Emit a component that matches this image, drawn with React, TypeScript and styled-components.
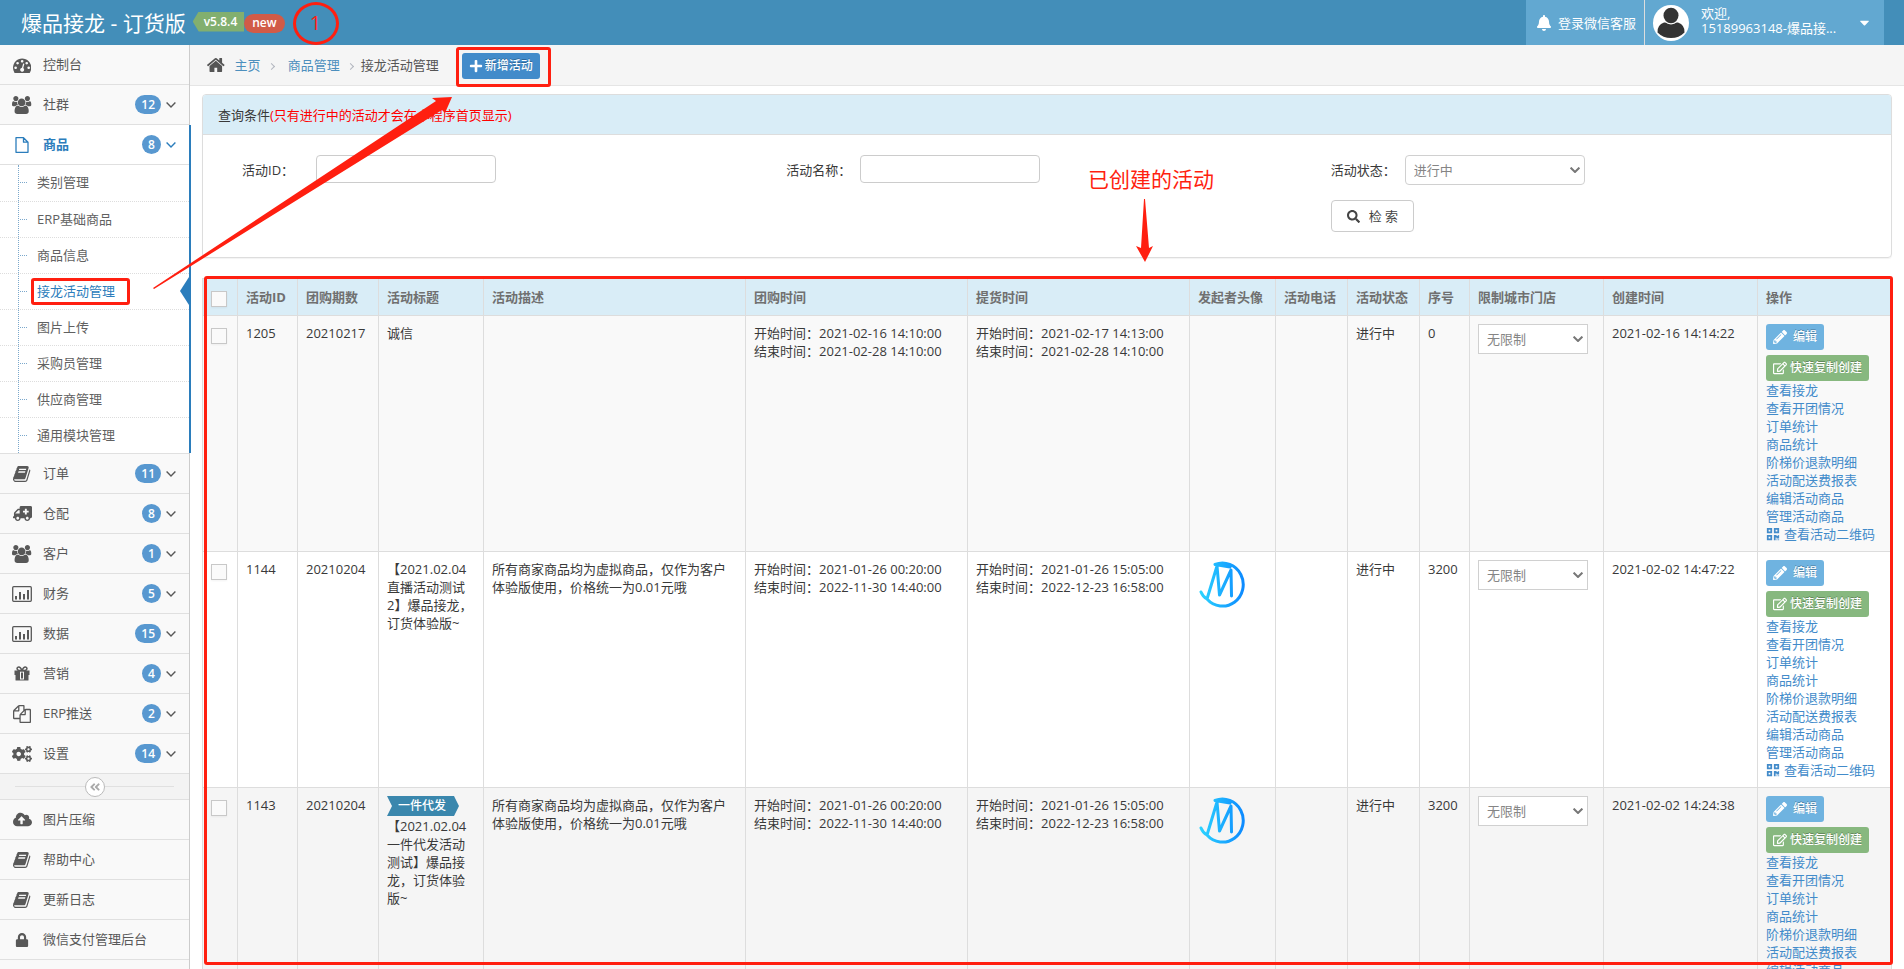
import React from 'react';
import styled, { createGlobalStyle, css } from 'styled-components';
import {
  FaAmbulance,
  FaAngleDoubleLeft,
  FaBell,
  FaCaretDown,
  FaCloudUploadAlt,
  FaCogs,
  FaLock,
  FaPencilAlt,
  FaPlus,
  FaQrcode,
  FaRegEdit,
  FaSearch,
} from 'react-icons/fa';

const RED = '#ff1f10';

const GlobalStyle = createGlobalStyle`
  *, *::before, *::after { box-sizing: border-box; }
  body {
    margin: 0;
    background: #fff;
    color: #393939;
    font: 13px/18px "Open Sans", "Noto Sans CJK SC", sans-serif;
  }
  a { color: inherit; text-decoration: none; }
  button, input, select { font: inherit; margin: 0; }
  ul { list-style: none; margin: 0; padding: 0; }
`;

/* ---------- icons ---------- */

type GlyphProps = { box: string; d: string; size: number };

const Glyph = ({ box, d, size }: GlyphProps) => (
  <svg viewBox={box} height={size} fill="currentColor" aria-hidden="true">
    <path d={d} />
  </svg>
);

const DashboardIcon = () => (
  <Glyph
    box="0 0 1792 1664"
    size={17}
    d="M384 1152q0-53-37.5-90.5t-90.5-37.5-90.5 37.5-37.5 90.5 37.5 90.5 90.5 37.5 90.5-37.5 37.5-90.5zm192-448q0-53-37.5-90.5t-90.5-37.5-90.5 37.5-37.5 90.5 37.5 90.5 90.5 37.5 90.5-37.5 37.5-90.5zm428 481l101-382q6-26-7.5-48.5t-38.5-29.5-48 6.5-30 39.5l-101 382q-60 5-107 43.5t-63 98.5q-20 77 20 146t117 89 146-20 89-117q16-60-6-117t-72-91zm660-33q0-53-37.5-90.5t-90.5-37.5-90.5 37.5-37.5 90.5 37.5 90.5 90.5 37.5 90.5-37.5 37.5-90.5zm-640-640q0-53-37.5-90.5t-90.5-37.5-90.5 37.5-37.5 90.5 37.5 90.5 90.5 37.5 90.5-37.5 37.5-90.5zm448 192q0-53-37.5-90.5t-90.5-37.5-90.5 37.5-37.5 90.5 37.5 90.5 90.5 37.5 90.5-37.5 37.5-90.5zm320 448q0 261-141 483-19 29-54 29h-1402q-35 0-54-29-141-221-141-483 0-182 71-348t191-286 286-191 348-71 348 71 286 191 191 286 71 348z"
  />
);

const GroupIcon = () => (
  <Glyph
    box="0 0 1920 1792"
    size={18}
    d="M593 896q-162 5-265 128h-134q-82 0-138-40.5t-56-118.5q0-353 124-353 6 0 43.5 21t97.5 42.5 119 21.5q67 0 133-23-5 37-5 66 0 139 81 256zm1071 637q0 120-73 189.5t-194 69.5h-874q-121 0-194-69.5t-73-189.5q0-53 3.5-103.5t14-109 26.5-108.5 43-97.5 62-81 85.5-53.5 111.5-20q10 0 43 21.5t73 48 107 48 135 21.5 135-21.5 107-48 73-48 43-21.5q61 0 111.5 20t85.5 53.5 62 81 43 97.5 26.5 108.5 14 109 3.5 103.5zm-1024-1277q0 106-75 181t-181 75-181-75-75-181 75-181 181-75 181 75 75 181zm704 384q0 159-112.5 271.5t-271.5 112.5-271.5-112.5-112.5-271.5 112.5-271.5 271.5-112.5 271.5 112.5 112.5 271.5zm576 225q0 78-56 118.5t-138 40.5h-134q-103-123-265-128 81-117 81-256 0-29-5-66 66 23 133 23 59 0 119-21.5t97.5-42.5 43.5-21q124 0 124 353zm-128-609q0 106-75 181t-181 75-181-75-75-181 75-181 181-75 181 75 75 181z"
  />
);

const FileIcon = () => (
  <svg viewBox="0 0 14 16" height={16} fill="none" stroke="currentColor" aria-hidden="true">
    <path d="M1 .7H8.5L13 5.2V15.3H1ZM8.5 .7V5.2H13" strokeWidth="1.3" strokeLinejoin="round" />
  </svg>
);

const BookIcon = () => (
  <Glyph
    box="0 128 1664 1536"
    size={16}
    d="M1639 478q40 57 18 129l-275 906q-19 64-76.5 107.5t-122.5 43.5h-923q-77 0-148.5-53.5t-99.5-131.5q-24-67-2-127 0-4 3-27t4-37q1-8-3-21.5t-3-19.5q2-11 8-21t16.5-23.5 16.5-23.5q23-38 45-91.5t30-91.5q3-10 .5-30t-.5-28q3-11 17-28t17-23q21-36 42-92t25-90q1-9-2.5-32t.5-28q4-13 22-30.5t22-22.5q19-26 42.5-84.5t27.5-96.5q1-8-3-25.5t-2-26.5q2-8 9-18t18-23 17-21q8-12 16.5-30.5t15-35 16-36 19.5-32 26.5-23.5 36-11.5 47.5 5.5l-1 3q38-9 51-9h761q74 0 114 56t18 130l-274 906q-36 119-71.5 153.5t-128.5 34.5h-869q-27 0-38 15-11 16-1 43 24 70 144 70h923q29 0 56-15.5t35-41.5l300-987q7-22 5-57 38 15 59 43zm-1064 2q-4 13 2 22.5t20 9.5h608q13 0 25.5-9.5t16.5-22.5l21-64q4-13-2-22.5t-20-9.5h-608q-13 0-25.5 9.5t-16.5 22.5zm-83 256q-4 13 2 22.5t20 9.5h608q13 0 25.5-9.5t16.5-22.5l21-64q4-13-2-22.5t-20-9.5h-608q-13 0-25.5 9.5t-16.5 22.5z"
  />
);

const CopyIcon = () => (
  <Glyph
    box="0 0 1792 1792"
    size={18}
    d="M1696 384q40 0 68 28t28 68v1216q0 40-28 68t-68 28h-960q-40 0-68-28t-28-68v-288h-544q-40 0-68-28t-28-68v-672q0-40 20-88t48-76l408-408q28-28 76-48t88-20h416q40 0 68 28t28 68v328q68-40 128-40h416zm-544 213l-299 299h299v-299zm-640-384l-299 299h299v-299zm196 647l316-316v-416h-384v416q0 40-28 68t-68 28h-416v640h512v-256q0-40 20-88t48-76zm956 804v-1152h-384v416q0 40-28 68t-68 28h-416v640h896z"
  />
);

const HomeIcon = () => (
  <Glyph
    box="89 253 1614 1283"
    size={14}
    d="M1472 992v480q0 26-19 45t-45 19h-384v-384h-256v384h-384q-26 0-45-19t-19-45v-480q0-1 .5-3t.5-3l575-474 575 474q1 2 1 6zm223-69l-62 74q-8 9-21 11h-3q-13 0-21-7l-692-577-692 577q-12 8-24 7-13-2-21-11l-62-74q-8-10-7-23.5t11-21.5l719-599q32-26 76-26t76 26l244 204v-195q0-14 9-23t23-9h192q14 0 23 9t9 23v408l219 182q10 8 11 21.5t-7 23.5z"
  />
);

const ChartIcon = () => (
  <svg viewBox="0 0 20 16" height={16} fill="currentColor" aria-hidden="true">
    <rect x=".7" y=".7" width="18.6" height="14.6" rx="1" fill="none" stroke="currentColor" strokeWidth="1.3" />
    <rect x="3" y="10" width="2" height="3.5" />
    <rect x="7" y="6" width="2" height="7.5" />
    <rect x="11" y="8" width="2" height="5.5" />
    <rect x="15" y="4" width="2" height="9.5" />
  </svg>
);

const GiftIcon = () => (
  <svg viewBox="0 0 16 15" height={15} fill="currentColor" aria-hidden="true">
    <path d="M.5 4.500H5.500V9H.5ZM10.500 4.500H15.500V9H10.500ZM1.500 9H6V14.500H2Q1.500 14.500 1.500 14ZM10 9H14.500V14Q14.500 14.500 14 14.500H10ZM5.500 4.500H10.500V5.500H5.500ZM6 13.500H10V14.500H6ZM7 6.500H9V12.500H7Z" />
    <path d="M5.500 5V14M10.500 5V14" stroke="currentColor" />
    <path
      d="M8 4.600Q6.500 1 4.700 1.100Q3 1.300 3 2.700Q3.200 4.300 5 4.500ZM8 4.600Q9.500 1 11.300 1.100Q13 1.300 13 2.700Q12.800 4.300 11 4.500Z"
      fill="none"
      stroke="currentColor"
      strokeWidth="1.500"
    />
  </svg>
);

const Chevron = ({ weight = 1.4 }: { weight?: number }) => (
  <svg viewBox="0 0 10 6" width={10} height={6} fill="none" stroke="currentColor" aria-hidden="true">
    <path d="M.6 .6L5 5L9.4 .6" strokeWidth={weight} />
  </svg>
);

const Mirrored = styled(FaAmbulance)`
  transform: scaleX(-1);
`;

/* ---------- header ---------- */

const Shell = styled.div`
  position: relative;
  display: flex;
  flex-direction: column;
  height: 100vh;
  overflow: hidden;
`;

const TopBar = styled.header`
  display: flex;
  justify-content: space-between;
  flex: none;
  height: 45px;
  padding: 0 20px 0 21px;
  background: #438eb9;
  color: #fff;
`;

const Brand = styled.a`
  display: flex;
  align-items: center;
  font-size: 21px;
`;

const VersionTag = styled.span`
  margin: 0 0 2px 7px;
  padding: 0 7px 0 11px;
  background: #82af6f;
  clip-path: polygon(6px 0, 100% 0, 100% 100%, 6px 100%, 0 50%);
  font-size: 12px;
  font-weight: 600;
  line-height: 20px;
`;

const NewTag = styled.span`
  margin-top: 2px;
  padding: 0 8px 1px;
  border-radius: 10px;
  background: #d15b47;
  font-size: 12px;
  font-weight: 600;
  line-height: 18px;
`;

const StepMark = styled.span`
  display: grid;
  place-items: center;
  width: 46px;
  height: 43px;
  margin: 1px 0 0 8px;
  border: 3px solid ${RED};
  border-radius: 50%;
  color: ${RED};
  font-size: 20px;
`;

const UserArea = styled.nav`
  display: flex;
  background: #62a8d1;
`;

const ServiceLink = styled.a`
  display: flex;
  align-items: center;
  gap: 6px;
  padding: 0 8px 0 10px;
  border-right: 1px solid #ddd;
`;

const UserMenu = styled.button`
  display: flex;
  align-items: center;
  gap: 12px;
  width: 239px;
  padding: 0 12px 0 8px;
  border: 0;
  background: none;
  color: #fff;
  text-align: left;
  line-height: 15px;
`;

const UserName = styled.span`
  flex: 1;
  min-width: 0;
  padding-bottom: 4px;
`;

const Avatar = () => (
  <svg width={36} height={36} viewBox="0 0 36 36" aria-hidden="true">
    <circle cx="18" cy="18" r="18" fill="#fff" />
    <path d="M11 17.5h14q7 2.500 6.500 10Q26 33 18 33T4.500 27.500Q4 20 11 17.500Z" fill="#333" />
    <ellipse cx="18" cy="10.500" rx="8.800" ry="9" fill="#fff" />
    <ellipse cx="18" cy="10.500" rx="7.500" ry="7.800" fill="#333" />
  </svg>
);

/* ---------- sidebar ---------- */

const Body = styled.div`
  display: flex;
  flex: 1;
  min-height: 0;
`;

const Sidebar = styled.nav`
  flex: none;
  width: 190px;
  border-right: 1px solid #ccc;
  background: #f9f9f9;
  color: #585858;
`;

const NavItem = styled.li<{ $first?: boolean; $active?: boolean }>`
  position: relative;
  border-top: ${(p) => (p.$first ? 0 : '1px solid #e0e0e0')};
  ${(p) =>
    p.$active &&
    css`
      background: #fff;
      &::after {
        content: '';
        position: absolute;
        top: 0;
        right: -2px;
        bottom: 0;
        width: 2px;
        background: #2b7dbc;
      }
    `}
`;

const NavLink = styled.a<{ $active?: boolean }>`
  display: flex;
  align-items: center;
  height: 39px;
  padding: 0 13px 0 11px;
  color: ${(p) => (p.$active ? '#2b7dbc' : '#585858')};
  font-weight: ${(p) => (p.$active ? 700 : 400)};
`;

const NavIcon = styled.span`
  display: flex;
  justify-content: center;
  width: 22px;
  margin-right: 10px;
`;

const NavText = styled.span`
  flex: 1;
  padding-bottom: 2px;
`;

const Badge = styled.span`
  min-width: 19px;
  margin-right: 5px;
  padding: 0 6px;
  border-radius: 10px;
  background: #5898d0;
  color: #fff;
  font-size: 12px;
  font-weight: 600;
  line-height: 19px;
  text-align: center;
`;

const SubMenu = styled.ul`
  position: relative;
  border-top: 1px solid #e0e0e0;
  &::before {
    content: '';
    position: absolute;
    top: 0;
    bottom: 0;
    left: 18px;
    border-left: 1px dotted #7ba8cc;
  }
`;

const SubItem = styled.li<{ $active?: boolean }>`
  position: relative;
  display: flex;
  align-items: center;
  height: 36px;
  padding: 0 0 2px 37px;
  color: ${(p) => (p.$active ? '#2b7dbc' : '#616161')};
  & + & {
    border-top: 1px dotted #ddd;
  }
  &::before {
    content: '';
    position: absolute;
    left: 20px;
    top: 17px;
    width: 7px;
    border-top: 1px dotted #7ba8cc;
  }
  ${(p) =>
    p.$active &&
    css`
      &::after {
        content: '';
        position: absolute;
        right: 0;
        top: 3px;
        width: 9px;
        height: 28px;
        background: #2b7dbc;
        clip-path: polygon(100% 0, 100% 100%, 0 50%);
      }
    `}
`;

const Outline = styled.span`
  position: absolute;
  inset: 4px 59px 4px 31px;
  border: 3px solid ${RED};
  border-radius: 3px;
`;

const CollapseBar = styled.div`
  display: flex;
  align-items: center;
  height: 27px;
  padding: 0 15px;
  border-top: 1px solid #e0e0e0;
  border-bottom: 1px solid #e0e0e0;
  background: #f3f3f3;
  &::before,
  &::after {
    content: '';
    flex: 1;
    border-top: 1px solid #e0e0e0;
  }
`;

const CollapseButton = styled.button`
  display: grid;
  place-items: center;
  width: 20px;
  height: 20px;
  padding: 0;
  border: 1px solid #bbb;
  border-radius: 50%;
  background: #fff;
  color: #aaa;
`;

/* ---------- content ---------- */

const Main = styled.main`
  flex: 1;
  min-width: 0;
  overflow: auto;
  scrollbar-width: none;
`;

const Breadcrumb = styled.nav`
  display: flex;
  align-items: center;
  height: 41px;
  padding-left: 17px;
  border-bottom: 1px solid #e5e5e5;
  background: #f5f5f5;
  color: #555;
`;

const Crumb = styled.a`
  color: #4c8fbd;
  margin-left: 10px;
`;

const Separator = styled.span`
  width: 5px;
  height: 5px;
  margin: 2px 4px 0 8px;
  border: solid #b2b6bf;
  border-width: 1px 1px 0 0;
  rotate: 45deg;
`;

const CurrentPage = styled.span`
  margin-left: 4px;
`;

const Highlight = styled.span`
  position: relative;
  z-index: 1;
  margin: 4px 0 0 17px;
  padding: 3px 8px 5px 3px;
  border: 3px solid ${RED};
  border-radius: 3px;
`;

const Button = styled.button<{ $color: string; $gap?: number }>`
  display: flex;
  align-items: center;
  gap: ${(p) => p.$gap ?? 3}px;
  height: 26px;
  padding: 0 7px;
  border: 0;
  border-radius: 3px;
  background: ${(p) => p.$color};
  color: #fff;
  font-size: 12px;
  font-weight: 500;
  text-shadow: 0 -1px 0 rgba(0, 0, 0, 0.25);
`;

const Content = styled.div`
  padding: 8px 12px;
`;

const Panel = styled.section`
  margin-bottom: 20px;
  border: 1px solid #ddd;
  border-radius: 4px;
  box-shadow: 0 1px 1px rgba(0, 0, 0, 0.05);
`;

const PanelHead = styled.h2`
  margin: 0;
  padding: 11px 15px 10px;
  border-bottom: 1px solid #ddd;
  border-radius: 3px 3px 0 0;
  background: #d9edf7;
  font-size: 13px;
  font-weight: 400;
  em {
    color: #f00;
    font-style: normal;
  }
`;

const Form = styled.form`
  display: grid;
  grid-template-columns: repeat(3, 1fr);
  gap: 15px 0;
  padding: 20px 16px 25px 39px;
`;

const Field = styled.div`
  display: flex;
  align-items: center;
  height: 30px;
`;

const Label = styled.label`
  width: 74px;
`;

const TextInput = styled.input`
  width: 180px;
  height: 28px;
  margin-bottom: 2px;
  padding: 0 8px;
  border: 1px solid #ccc;
  border-radius: 4px;
  background: #fff;
  color: #858585;
`;

const SelectBox = styled.span<{ $width: number }>`
  position: relative;
  display: block;
  width: ${(p) => p.$width}px;
  color: #777;
  svg {
    position: absolute;
    right: 5px;
    top: 12px;
    pointer-events: none;
  }
`;

const SelectInput = styled.select<{ $round?: boolean }>`
  appearance: none;
  display: block;
  width: 100%;
  height: 30px;
  padding: 0 8px;
  border: 1px solid #d0d0d0;
  border-radius: ${(p) => (p.$round ? 4 : 0)}px;
  background: #fff;
  color: #858585;
`;

const SearchButton = styled.button`
  grid-column: 3;
  justify-self: start;
  display: flex;
  align-items: center;
  gap: 9px;
  height: 32px;
  padding: 0 15px;
  border: 1px solid #ccc;
  border-radius: 4px;
  background: #fff;
  color: #444;
`;

const Grid = styled.table`
  width: 100%;
  min-width: 1600px;
  table-layout: fixed;
  border-spacing: 0;
  border: solid #ddd;
  border-width: 1px 0 0 1px;
`;

const Col = styled.col<{ $width?: number }>`
  width: ${(p) => (p.$width ? `${p.$width}px` : 'auto')};
`;

const HeadCell = styled.th`
  padding: 8px;
  border: solid #ddd;
  border-width: 0 1px 1px 0;
  background: #d9edf7;
  color: #707070;
  font-weight: 700;
  line-height: 20px;
  text-align: left;
  vertical-align: top;
  white-space: nowrap;
`;

const Row = styled.tr<{ $tone: string }>`
  background: ${(p) => p.$tone};
`;

const Cell = styled.td`
  padding: 8px;
  border: solid #ddd;
  border-width: 0 1px 1px 0;
  vertical-align: top;
`;

const Check = styled.input`
  appearance: none;
  display: block;
  width: 16px;
  height: 16px;
  margin-top: 4px;
  border: 1px solid #c8c8c8;
  background: #fafafa;
  box-shadow: 0 1px 2px rgba(0, 0, 0, 0.05);
`;

const Ribbon = styled.span`
  display: block;
  width: 72px;
  margin-bottom: 1px;
  padding-left: 11px;
  background: #3a87ad;
  clip-path: polygon(0 0, calc(100% - 5px) 0, 100% 50%, calc(100% - 5px) 100%, 0 100%, 5px 50%);
  color: #fff;
  font-size: 12px;
  font-weight: 500;
  line-height: 20px;
`;

const ButtonStack = styled.div`
  display: flex;
  flex-direction: column;
  align-items: flex-start;
  gap: 5px;
`;

const ActionLink = styled.a`
  display: flex;
  align-items: center;
  gap: 4px;
  color: #428bca;
  white-space: nowrap;
`;

/* ---------- annotations over the page ---------- */

const TableFrame = styled.div`
  position: absolute;
  inset: 276px 11px 4px 204px;
  border: 3px solid ${RED};
  border-radius: 3px;
  pointer-events: none;
`;

const Note = styled.div`
  position: absolute;
  left: 1088px;
  top: 165px;
  color: ${RED};
  font-size: 21px;
  line-height: 28px;
`;

const Arrows = styled.svg`
  position: absolute;
  left: 0;
  top: 0;
  fill: ${RED};
  pointer-events: none;
`;

/* ---------- data ---------- */

type NavEntry = { text: string; icon: React.ReactNode; count?: number };

const mainNav: NavEntry[] = [
  { text: '控制台', icon: <DashboardIcon /> },
  { text: '社群', icon: <GroupIcon />, count: 12 },
  { text: '商品', icon: <FileIcon />, count: 8 },
  { text: '订单', icon: <BookIcon />, count: 11 },
  { text: '仓配', icon: <Mirrored size={19} />, count: 8 },
  { text: '客户', icon: <GroupIcon />, count: 1 },
  { text: '财务', icon: <ChartIcon />, count: 5 },
  { text: '数据', icon: <ChartIcon />, count: 15 },
  { text: '营销', icon: <GiftIcon />, count: 4 },
  { text: 'ERP推送', icon: <CopyIcon />, count: 2 },
  { text: '设置', icon: <FaCogs size={20} />, count: 14 },
];

const toolNav: NavEntry[] = [
  { text: '图片压缩', icon: <FaCloudUploadAlt size={19} /> },
  { text: '帮助中心', icon: <BookIcon /> },
  { text: '更新日志', icon: <BookIcon /> },
  { text: '微信支付管理后台', icon: <FaLock size={14} /> },
];

const subNav = [
  '类别管理',
  'ERP基础商品',
  '商品信息',
  '接龙活动管理',
  '图片上传',
  '采购员管理',
  '供应商管理',
  '通用模块管理',
];

const columns: { title: string; width?: number }[] = [
  { title: '活动ID', width: 60 },
  { title: '团购期数', width: 81 },
  { title: '活动标题', width: 105 },
  { title: '活动描述' },
  { title: '团购时间', width: 222 },
  { title: '提货时间', width: 222 },
  { title: '发起者头像', width: 86 },
  { title: '活动电话', width: 72 },
  { title: '活动状态', width: 72 },
  { title: '序号', width: 50 },
  { title: '限制城市门店', width: 134 },
  { title: '创建时间', width: 154 },
  { title: '操作', width: 134 },
];

const description = '所有商家商品均为虚拟商品，仅作为客户体验版使用，价格统一为0.01元哦';

const activities = [
  {
    id: '1205', issue: '20210217', title: '诚信', tag: '', text: '', logo: false, tone: '#f9f9f9',
    buy: ['2021-02-16 14:10:00', '2021-02-28 14:10:00'],
    pick: ['2021-02-17 14:13:00', '2021-02-28 14:10:00'],
    order: '0', created: '2021-02-16 14:14:22',
  },
  {
    id: '1144', issue: '20210204', title: '【2021.02.04直播活动测试2】爆品接龙，订货体验版~', tag: '',
    text: description, logo: true, tone: '#fff',
    buy: ['2021-01-26 00:20:00', '2022-11-30 14:40:00'],
    pick: ['2021-01-26 15:05:00', '2022-12-23 16:58:00'],
    order: '3200', created: '2021-02-02 14:47:22',
  },
  {
    id: '1143', issue: '20210204', title: '【2021.02.04一件代发活动测试】爆品接龙，订货体验版~', tag: '一件代发',
    text: description, logo: true, tone: '#f5f5f5',
    buy: ['2021-01-26 00:20:00', '2022-11-30 14:40:00'],
    pick: ['2021-01-26 15:05:00', '2022-12-23 16:58:00'],
    order: '3200', created: '2021-02-02 14:24:38',
  },
];

const actions = [
  '查看接龙',
  '查看开团情况',
  '订单统计',
  '商品统计',
  '阶梯价退款明细',
  '活动配送费报表',
  '编辑活动商品',
  '管理活动商品',
];

/* ---------- composed parts ---------- */

const NavRow = ({ entry, active }: { entry: NavEntry; active?: boolean }) => (
  <NavLink href="#" $active={active}>
    <NavIcon>{entry.icon}</NavIcon>
    <NavText>{entry.text}</NavText>
    {entry.count !== undefined && (
      <>
        <Badge>{entry.count}</Badge>
        <Chevron />
      </>
    )}
  </NavLink>
);

const TimeRange = ({ range }: { range: string[] }) => (
  <>
    开始时间：{range[0]}
    <br />
    结束时间：{range[1]}
  </>
);

const SponsorLogo = ({ id }: { id: string }) => (
  <svg width={48} height={48} viewBox="3 5 48 48" fill="none" role="img" aria-label="发起者头像">
    <defs>
      <linearGradient id={id} x1="0" y1="0" x2="1" y2="0">
        <stop offset="0" stopColor="#2bd2ff" />
        <stop offset="1" stopColor="#0d8bff" />
      </linearGradient>
    </defs>
    <path
      d="M6 37Q8 42 12 44L22 11L24.500 40L36 15L36.500 41M12 44A20.800 21.500 0 1 0 20 9.500L35 12"
      stroke={`url(#${id})`}
      strokeWidth="3"
      strokeLinecap="round"
      strokeLinejoin="round"
    />
  </svg>
);

export default function App() {
  return (
    <Shell>
      <GlobalStyle />
      <TopBar>
        <Brand href="#">
          爆品接龙 - 订货版
          <VersionTag>v5.8.4</VersionTag>
          <NewTag>new</NewTag>
          <StepMark>1</StepMark>
        </Brand>
        <UserArea>
          <ServiceLink href="#">
            <FaBell size={16} />
            登录微信客服
          </ServiceLink>
          <UserMenu type="button">
            <Avatar />
            <UserName>
              欢迎,
              <br />
              15189963148-爆品接...
            </UserName>
            <FaCaretDown size={15} />
          </UserMenu>
        </UserArea>
      </TopBar>

      <Body>
        <Sidebar>
          <ul>
            {mainNav.map((entry, i) => {
              const active = entry.text === '商品';
              return (
                <NavItem key={entry.text} $first={i === 0} $active={active}>
                  <NavRow entry={entry} active={active} />
                  {active && (
                    <SubMenu>
                      {subNav.map((name) => (
                        <SubItem key={name} $active={name === '接龙活动管理'}>
                          <a href="#">{name}</a>
                          {name === '接龙活动管理' && <Outline />}
                        </SubItem>
                      ))}
                    </SubMenu>
                  )}
                </NavItem>
              );
            })}
          </ul>
          <CollapseBar>
            <CollapseButton type="button" aria-label="收起菜单">
              <FaAngleDoubleLeft size={12} />
            </CollapseButton>
          </CollapseBar>
          <ul>
            {toolNav.map((entry, i) => (
              <NavItem key={entry.text} $first={i === 0}>
                <NavRow entry={entry} />
              </NavItem>
            ))}
            <NavItem />
          </ul>
        </Sidebar>

        <Main>
          <Breadcrumb>
            <HomeIcon />
            <Crumb href="#">主页</Crumb>
            <Separator />
            <Crumb href="#">商品管理</Crumb>
            <Separator />
            <CurrentPage>接龙活动管理</CurrentPage>
            <Highlight>
              <Button type="button" $color="#428bca" $gap={2}>
                <FaPlus size={14} />
                新增活动
              </Button>
            </Highlight>
          </Breadcrumb>

          <Content>
            <Panel>
              <PanelHead>
                查询条件<em>(只有进行中的活动才会在小程序首页显示)</em>
              </PanelHead>
              <Form>
                <Field>
                  <Label htmlFor="activity-id">活动ID：</Label>
                  <TextInput id="activity-id" type="text" />
                </Field>
                <Field>
                  <Label htmlFor="activity-name">活动名称：</Label>
                  <TextInput id="activity-name" type="text" />
                </Field>
                <Field>
                  <Label htmlFor="activity-state">活动状态：</Label>
                  <SelectBox $width={180}>
                    <SelectInput id="activity-state" $round>
                      <option>进行中</option>
                    </SelectInput>
                    <Chevron weight={2} />
                  </SelectBox>
                </Field>
                <SearchButton type="button">
                  <FaSearch size={13} />
                  检 索
                </SearchButton>
              </Form>
            </Panel>

            <Grid>
              <colgroup>
                <Col $width={35} />
                {columns.map((c) => (
                  <Col key={c.title} $width={c.width} />
                ))}
              </colgroup>
              <thead>
                <tr>
                  <HeadCell>
                    <Check type="checkbox" aria-label="全选" />
                  </HeadCell>
                  {columns.map((c) => (
                    <HeadCell key={c.title}>{c.title}</HeadCell>
                  ))}
                </tr>
              </thead>
              <tbody>
                {activities.map((a) => (
                  <Row key={a.id} $tone={a.tone}>
                    <Cell>
                      <Check type="checkbox" aria-label={`选择 ${a.id}`} />
                    </Cell>
                    <Cell>{a.id}</Cell>
                    <Cell>{a.issue}</Cell>
                    <Cell>
                      {a.tag && <Ribbon>{a.tag}</Ribbon>}
                      {a.title}
                    </Cell>
                    <Cell>{a.text}</Cell>
                    <Cell>
                      <TimeRange range={a.buy} />
                    </Cell>
                    <Cell>
                      <TimeRange range={a.pick} />
                    </Cell>
                    <Cell>{a.logo && <SponsorLogo id={`logo-${a.id}`} />}</Cell>
                    <Cell />
                    <Cell>进行中</Cell>
                    <Cell>{a.order}</Cell>
                    <Cell>
                      <SelectBox $width={110}>
                        <SelectInput aria-label="限制城市门店">
                          <option>无限制</option>
                        </SelectInput>
                        <Chevron weight={2} />
                      </SelectBox>
                    </Cell>
                    <Cell>{a.created}</Cell>
                    <Cell>
                      <ButtonStack>
                        <Button type="button" $color="#6fb3e0" $gap={6}>
                          <FaPencilAlt size={14} />
                          编辑
                        </Button>
                        <Button type="button" $color="#87b87f">
                          <FaRegEdit size={14} />
                          快速复制创建
                        </Button>
                      </ButtonStack>
                      {actions.map((name) => (
                        <ActionLink key={name} href="#">
                          {name}
                        </ActionLink>
                      ))}
                      <ActionLink href="#">
                        <FaQrcode size={14} />
                        查看活动二维码
                      </ActionLink>
                    </Cell>
                  </Row>
                ))}
              </tbody>
            </Grid>
          </Content>
        </Main>
      </Body>

      <TableFrame />
      <Note>已创建的活动</Note>
      <Arrows width={1200} height={300} aria-hidden="true">
        <polygon points="153,288 436,101 432,98 452,97 445,113 442,110 154,289" />
        <polygon points="1144,199 1145,199 1149,248 1153,246 1145,262 1136,246 1141,248" />
      </Arrows>
    </Shell>
  );
}
